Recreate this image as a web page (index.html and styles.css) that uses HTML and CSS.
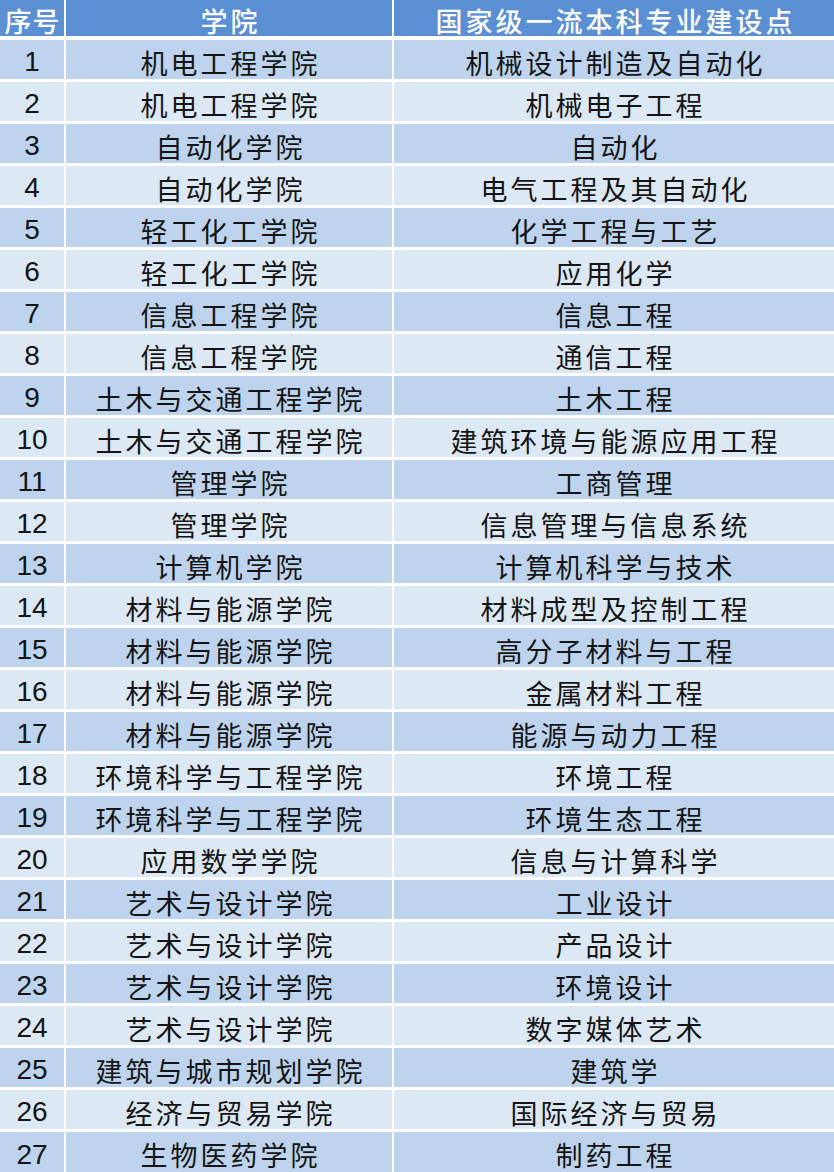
FILE: index.html
```html
<!DOCTYPE html>
<html lang="zh-CN">
<head>
<meta charset="utf-8">
<title>国家级一流本科专业建设点</title>
<link rel="stylesheet" href="styles.css">
</head>
<body>
<div class="table">
  <div class="row head"><div class="cell num">序号</div><div class="cell">学院</div><div class="cell">国家级一流本科专业建设点</div></div>
  <div class="row"><div class="cell num">1</div><div class="cell">机电工程学院</div><div class="cell">机械设计制造及自动化</div></div>
  <div class="row"><div class="cell num">2</div><div class="cell">机电工程学院</div><div class="cell">机械电子工程</div></div>
  <div class="row"><div class="cell num">3</div><div class="cell">自动化学院</div><div class="cell">自动化</div></div>
  <div class="row"><div class="cell num">4</div><div class="cell">自动化学院</div><div class="cell">电气工程及其自动化</div></div>
  <div class="row"><div class="cell num">5</div><div class="cell">轻工化工学院</div><div class="cell">化学工程与工艺</div></div>
  <div class="row"><div class="cell num">6</div><div class="cell">轻工化工学院</div><div class="cell">应用化学</div></div>
  <div class="row"><div class="cell num">7</div><div class="cell">信息工程学院</div><div class="cell">信息工程</div></div>
  <div class="row"><div class="cell num">8</div><div class="cell">信息工程学院</div><div class="cell">通信工程</div></div>
  <div class="row"><div class="cell num">9</div><div class="cell">土木与交通工程学院</div><div class="cell">土木工程</div></div>
  <div class="row"><div class="cell num">10</div><div class="cell">土木与交通工程学院</div><div class="cell">建筑环境与能源应用工程</div></div>
  <div class="row"><div class="cell num">11</div><div class="cell">管理学院</div><div class="cell">工商管理</div></div>
  <div class="row"><div class="cell num">12</div><div class="cell">管理学院</div><div class="cell">信息管理与信息系统</div></div>
  <div class="row"><div class="cell num">13</div><div class="cell">计算机学院</div><div class="cell">计算机科学与技术</div></div>
  <div class="row"><div class="cell num">14</div><div class="cell">材料与能源学院</div><div class="cell">材料成型及控制工程</div></div>
  <div class="row"><div class="cell num">15</div><div class="cell">材料与能源学院</div><div class="cell">高分子材料与工程</div></div>
  <div class="row"><div class="cell num">16</div><div class="cell">材料与能源学院</div><div class="cell">金属材料工程</div></div>
  <div class="row"><div class="cell num">17</div><div class="cell">材料与能源学院</div><div class="cell">能源与动力工程</div></div>
  <div class="row"><div class="cell num">18</div><div class="cell">环境科学与工程学院</div><div class="cell">环境工程</div></div>
  <div class="row"><div class="cell num">19</div><div class="cell">环境科学与工程学院</div><div class="cell">环境生态工程</div></div>
  <div class="row"><div class="cell num">20</div><div class="cell">应用数学学院</div><div class="cell">信息与计算科学</div></div>
  <div class="row"><div class="cell num">21</div><div class="cell">艺术与设计学院</div><div class="cell">工业设计</div></div>
  <div class="row"><div class="cell num">22</div><div class="cell">艺术与设计学院</div><div class="cell">产品设计</div></div>
  <div class="row"><div class="cell num">23</div><div class="cell">艺术与设计学院</div><div class="cell">环境设计</div></div>
  <div class="row"><div class="cell num">24</div><div class="cell">艺术与设计学院</div><div class="cell">数字媒体艺术</div></div>
  <div class="row"><div class="cell num">25</div><div class="cell">建筑与城市规划学院</div><div class="cell">建筑学</div></div>
  <div class="row"><div class="cell num">26</div><div class="cell">经济与贸易学院</div><div class="cell">国际经济与贸易</div></div>
  <div class="row last"><div class="cell num">27</div><div class="cell">生物医药学院</div><div class="cell">制药工程</div></div>
</div>
</body>
</html>
```
FILE: styles.css
```css
html, body {
  margin: 0;
  padding: 0;
  background: #ffffff;
}
body {
  width: 834px;
  height: 1172px;
  overflow: hidden;
  font-family: "Noto Sans CJK SC", "Noto Sans", sans-serif;
  color: #141414;
}
.table {
  display: flex;
  flex-direction: column;
  gap: 3px;
}
.row {
  display: grid;
  grid-template-columns: 64px 326px 1fr;
  column-gap: 2px;
  height: 39px;
}
.row.head {
  height: 36px;
  margin-bottom: 1px;
}
.row.last {
  height: 40px;
}
.cell {
  display: flex;
  align-items: center;
  justify-content: center;
  padding-top: 5px;
  padding-left: 3px;
  box-sizing: border-box;
  font-size: 27px;
  letter-spacing: 3px;
  line-height: 1;
  white-space: nowrap;
  background: #bed4ee;
}
.row:nth-child(odd) .cell {
  background: #dde8f5;
}
.cell.num {
  font-family: "Liberation Sans", "Noto Sans CJK SC", sans-serif;
  font-size: 28px;
  letter-spacing: 0;
  padding-left: 0;
  padding-top: 5px;
}
.row.head .cell {
  background: #5a8fd4;
  color: #ffffff;
  font-weight: 500;
  padding-top: 4px;
}
.row.head .cell.num {
  font-family: "Noto Sans CJK SC", sans-serif;
  font-size: 27px;
  letter-spacing: 1px;
  padding-left: 1px;
}
```
